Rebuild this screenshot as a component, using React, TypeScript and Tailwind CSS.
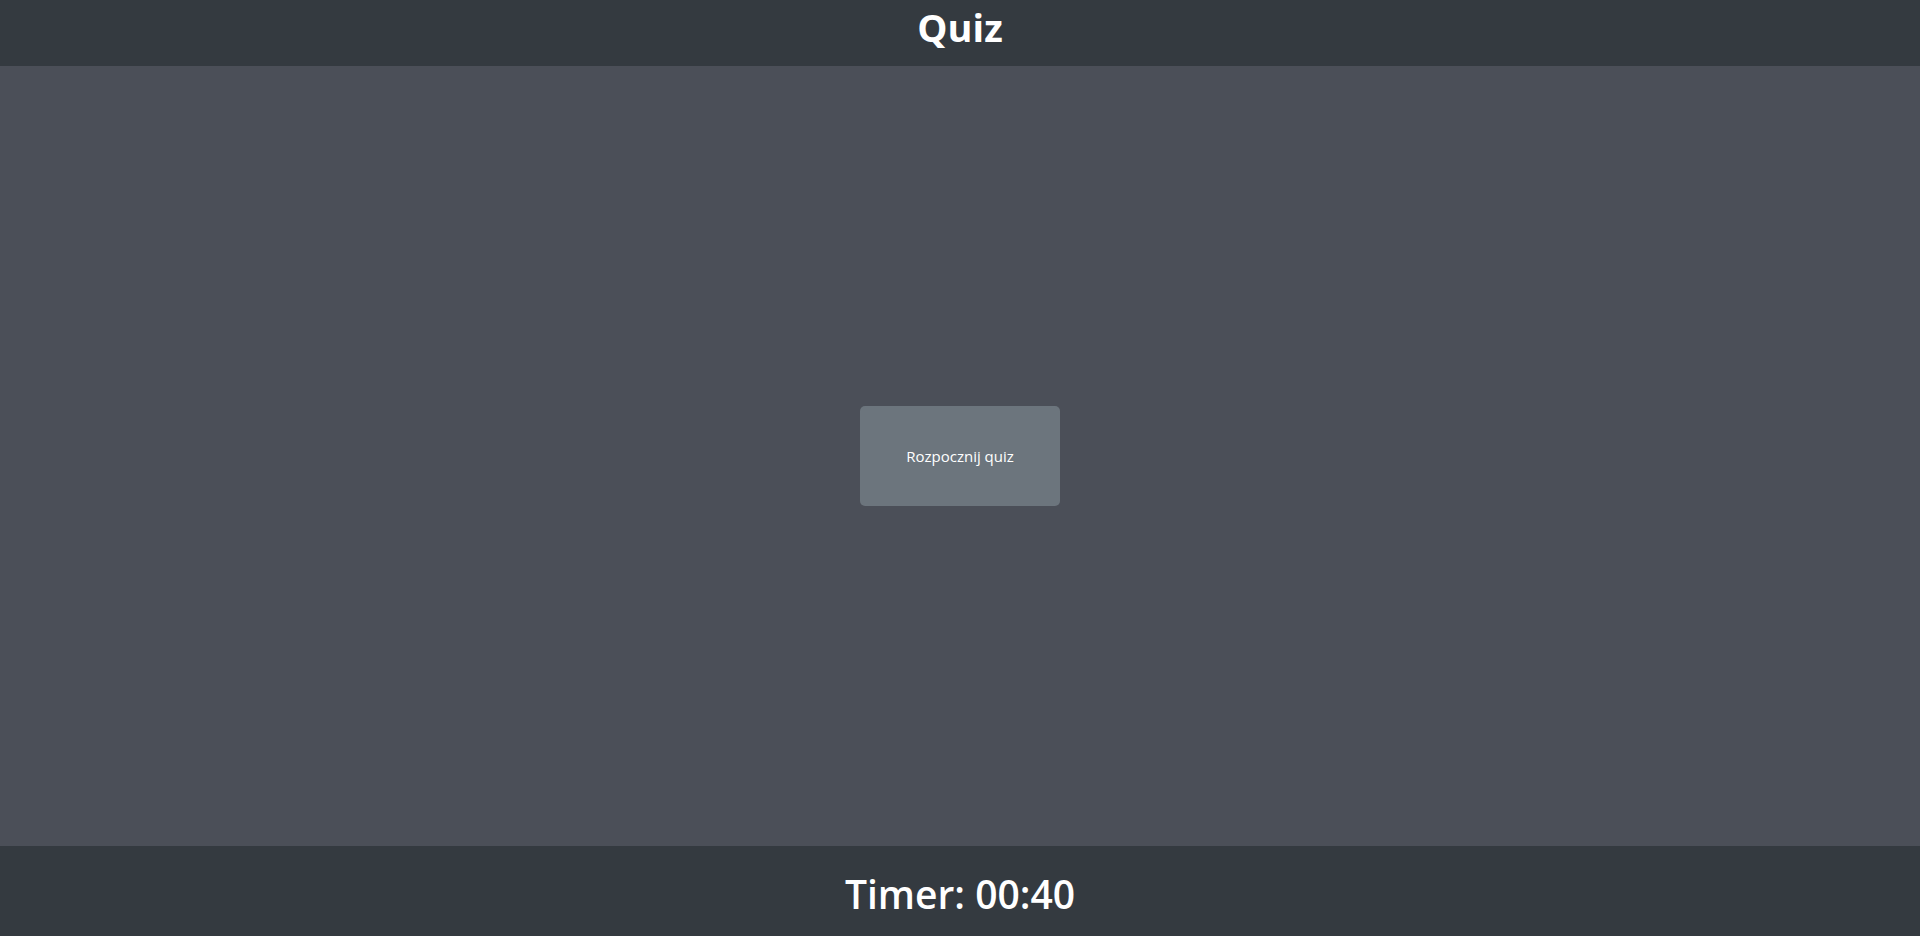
import { useState } from "react";

function App() {
  const [started, setStarted] = useState(false);

  return (
    <div className="flex h-screen flex-col bg-[#4b4f58] text-white font-['Open_Sans',sans-serif]">
      {/* header */}
      <header className="flex h-[66px] shrink-0 items-start justify-center bg-[#343a40]">
        <h1 className="mt-[5px] text-[38px] font-bold leading-[44px]">Quiz</h1>
      </header>

      {/* main area */}
      <main className="flex flex-1 items-center justify-center">
        {!started && (
          <button
            className="h-[100px] w-[200px] rounded-[5px] bg-[#6c757d] text-[15px] text-white"
            onClick={() => setStarted(true)}
          >
            Rozpocznij quiz
          </button>
        )}
      </main>

      {/* timer */}
      <footer className="flex h-[90px] shrink-0 items-center justify-center bg-[#343a40]">
        <span className="mt-[5px] text-[39px] font-semibold leading-[48px]">Timer: 00:40</span>
      </footer>
    </div>
  );
}

export default App;
